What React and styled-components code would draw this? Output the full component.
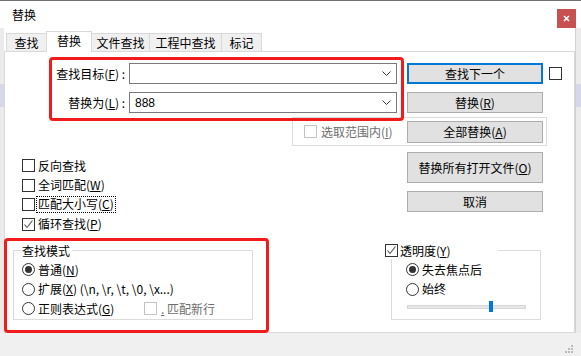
import React from "react";
import styled, { createGlobalStyle } from "styled-components";

const GlobalStyle = createGlobalStyle`
  body {
    margin: 0;
    background: #ffffff;
    font-family: "Noto Sans CJK SC", "Noto Sans", sans-serif;
    font-size: 12px;
    color: #000;
  }
  * { box-sizing: border-box; }
`;

const Window = styled.div`
  position: relative;
  width: 581px;
  height: 356px;
  display: flex;
  flex-direction: column;
  overflow: hidden;
  background: #fff;
`;

const TitleBar = styled.div`
  height: 28px;
  border-top: 1px solid #707070;
  display: flex;
  align-items: center;
  padding: 0 5px 0 12px;
  line-height: 1;
`;

const CloseBtn = styled.div`
  width: 19px;
  height: 19px;
  margin-left: auto;
  align-self: flex-end;
  background: #c75050;
  display: flex;
  align-items: center;
  justify-content: center;
`;

const Middle = styled.div`
  height: 305px;
  display: flex;
`;

const Gutter = styled.div`
  width: ${(p) => p.$w}px;
  background: #ebebeb;
  border-left: ${(p) => (p.$line ? "1px solid #d2d2d2" : "none")};
  display: flex;
  flex-direction: column;
`;

const Patch = styled.div`
  margin-top: 56px;
  height: 23px;
  background: #d7d7ea;
`;

const Main = styled.div`
  width: 571px;
  display: flex;
  flex-direction: column;
`;

const TabStrip = styled.div`
  height: 23px;
  display: flex;
  align-items: flex-end;
  padding-left: 2px;
`;

const Tab = styled.div`
  position: relative;
  width: ${(p) => p.$w}px;
  height: ${(p) => (p.$active ? 21 : 18)}px;
  margin-left: ${(p) => (p.$first ? 0 : -1)}px;
  margin-bottom: ${(p) => (p.$active ? -1 : 0)}px;
  z-index: ${(p) => (p.$active ? 2 : 1)};
  background: ${(p) => (p.$active ? "#ffffff" : "#f0f0f0")};
  border: 1px solid #d9d9d9;
  border-bottom: none;
  display: flex;
  align-items: center;
  justify-content: center;
  padding-bottom: ${(p) => (p.$active ? 3 : 0)}px;
  line-height: 1;
`;

const Panel = styled.div`
  height: 282px;
  border: 1px solid #d9d9d9;
  background: #fff;
  padding-top: 11px;
  display: flex;
  flex-direction: column;
`;

const FieldRow = styled.div`
  display: flex;
  align-items: center;
  height: 21px;
  margin-top: ${(p) => p.$mt || 0}px;
`;

const FieldLabel = styled.div`
  width: 124px;
  padding-right: 4px;
  text-align: right;
  line-height: 1;
  white-space: nowrap;
`;

const Combo = styled.div`
  width: 268px;
  height: 21px;
  border: 1px solid #7a7a7a;
  background: #fff;
  display: flex;
  align-items: center;
  padding: 0 5px 0 5px;
  line-height: 1;
  font-size: 12px;
`;

const ComboText = styled.span`
  flex: 1;
  font-family: "Liberation Sans", "Noto Sans", sans-serif;
`;

const Button = styled.div`
  width: 136px;
  height: ${(p) => p.$h || 21}px;
  margin-left: ${(p) => (p.$push ? "auto" : `${p.$ml || 0}px`)};
  margin-top: ${(p) => p.$mt || 0}px;
  background: #e1e1e1;
  border: 1px solid ${(p) => (p.$primary ? "#0078d7" : "#adadad")};
  box-shadow: ${(p) => (p.$primary ? "inset 0 0 0 1px #0078d7" : "none")};
  display: flex;
  align-items: center;
  justify-content: center;
  line-height: 1;
  white-space: nowrap;
`;

const Box = styled.div`
  flex: none;
  width: 13px;
  height: 13px;
  margin-left: ${(p) => p.$ml || 0}px;
  border: 1px solid ${(p) => (p.$disabled ? "#c4c4c4" : "#333333")};
  background: #fff;
  display: flex;
  align-items: center;
  justify-content: center;
`;

const Round = styled.div`
  flex: none;
  width: 13px;
  height: 13px;
  border: 1px solid #333;
  border-radius: 50%;
  background: #fff;
  display: flex;
  align-items: center;
  justify-content: center;

  &::after {
    content: "";
    display: ${(p) => (p.$on ? "block" : "none")};
    width: 7px;
    height: 7px;
    border-radius: 50%;
    background: #333;
  }
`;

const SelGroup = styled.div`
  margin: 4px 0 0 287px;
  width: 255px;
  height: 29px;
  border: 1px solid #dcdcdc;
  display: flex;
  align-items: center;
  padding: 0 3px 0 11px;
`;

const Text = styled.span`
  margin-left: ${(p) => p.$ml ?? 3}px;
  color: ${(p) => (p.$disabled ? "#6d6d6d" : "#000")};
  line-height: 1;
  white-space: nowrap;
  width: ${(p) => (p.$w ? `${p.$w}px` : "auto")};
  flex: none;
  padding: ${(p) => (p.$focus ? "1px 1px 2px" : "0")};
  outline: ${(p) => (p.$focus ? "1px dotted #000" : "none")};
`;

const OptionsArea = styled.div`
  display: grid;
  grid-template-columns: 402px 136px;
  margin-top: 6px;
`;

const CheckList = styled.div`
  padding: 4px 0 0 17px;
  display: flex;
  flex-direction: column;
`;

const Row = styled.div`
  display: flex;
  align-items: center;
  height: 19.5px;
`;

const ButtonColumn = styled.div`
  display: flex;
  flex-direction: column;
`;

const GroupsArea = styled.div`
  display: flex;
  margin-top: 16px;
`;

const Group = styled.div`
  position: relative;
  width: ${(p) => p.$w}px;
  height: 70px;
  margin-left: ${(p) => p.$ml}px;
  border: 1px solid #dcdcdc;
  padding: 9px 0 0 ${(p) => p.$pl}px;
  display: flex;
  flex-direction: column;
`;

const Caption = styled.div`
  position: absolute;
  top: -9px;
  left: ${(p) => p.$left}px;
  width: ${(p) => (p.$w ? `${p.$w}px` : "auto")};
  height: 17px;
  background: #fff;
  display: flex;
  align-items: center;
  padding: 0 2px 0 1px;
  line-height: 1;
`;

const Track = styled.div`
  position: relative;
  width: 119px;
  height: 4px;
  margin: 6px 0 0 1px;
  background: #e7e7e7;
  border: 1px solid #d6d6d6;
`;

const Thumb = styled.div`
  position: absolute;
  left: 81px;
  top: -5px;
  width: 4px;
  height: 11px;
  background: #0078d7;
`;

const Footer = styled.div`
  height: 23px;
  background: #f0f0f0;
  display: flex;
  justify-content: flex-end;
  align-items: flex-end;
  padding: 0 8px 3px 0;
`;

const Annotation = styled.div`
  position: absolute;
  left: ${(p) => p.$x}px;
  top: ${(p) => p.$y}px;
  width: ${(p) => p.$w}px;
  height: ${(p) => p.$h}px;
  border: 3px solid #f21b1b;
  border-radius: 4px;
  pointer-events: none;
  z-index: 5;
`;

const Key = ({ k }) => (
  <>
    (<u>{k}</u>)
  </>
);

const Chevron = () => (
  <svg width="9" height="5" viewBox="0 0 9 5">
    <polyline points="0.5,0.5 4.5,4.5 8.5,0.5" fill="none" stroke="#333" strokeWidth="1" />
  </svg>
);

const Tick = () => (
  <svg width="11" height="11" viewBox="0 0 11 11">
    <polyline points="1.5,5.5 4,8.5 9.5,1.5" fill="none" stroke="#555" strokeWidth="1.1" />
  </svg>
);

const Grip = () => (
  <svg width="9" height="9" viewBox="0 0 9 9">
    {[
      [7, 1],
      [4, 4],
      [7, 4],
      [1, 7],
      [4, 7],
      [7, 7],
    ].map(([x, y]) => (
      <rect key={`${x}-${y}`} x={x} y={y} width="2" height="2" fill="#bcbcbc" />
    ))}
  </svg>
);

const tabs = [
  { label: "查找", w: 41 },
  { label: "替换", w: 46, active: true },
  { label: "文件查找", w: 59 },
  { label: "工程中查找", w: 73 },
  { label: "标记", w: 41 },
];

export default function App() {
  return (
    <Window>
      <GlobalStyle />
      <TitleBar>
        <span>替换</span>
        <CloseBtn>
          <svg width="7" height="7" viewBox="0 0 7 7">
            <path d="M1 1 L6 6 M6 1 L1 6" stroke="#fff" strokeWidth="1.6" />
          </svg>
        </CloseBtn>
      </TitleBar>

      <Middle>
        <Gutter $w={4}>
          <Patch />
        </Gutter>
        <Main>
          <TabStrip>
            {tabs.map((t, i) => (
              <Tab key={t.label} $w={t.w} $active={t.active} $first={i === 0}>
                {t.label}
              </Tab>
            ))}
          </TabStrip>
          <Panel>
            <FieldRow>
              <FieldLabel>
                查找目标<Key k="F" /> :
              </FieldLabel>
              <Combo>
                <ComboText />
                <Chevron />
              </Combo>
              <Button $primary $ml={10}>
                查找下一个
              </Button>
              <Box $ml={6} />
            </FieldRow>
            <FieldRow $mt={8}>
              <FieldLabel>
                替换为<Key k="L" /> :
              </FieldLabel>
              <Combo>
                <ComboText>888</ComboText>
                <Chevron />
              </Combo>
              <Button $ml={10}>
                替换<Key k="R" />
              </Button>
            </FieldRow>
            <SelGroup>
              <Box $disabled />
              <Text $disabled $ml={4}>
                选取范围内<Key k="I" />
              </Text>
              <Button $h={22} $push>
                全部替换<Key k="A" />
              </Button>
            </SelGroup>

            <OptionsArea>
              <CheckList>
                <Row>
                  <Box />
                  <Text>反向查找</Text>
                </Row>
                <Row>
                  <Box />
                  <Text>
                    全词匹配<Key k="W" />
                  </Text>
                </Row>
                <Row>
                  <Box />
                  <Text $ml={2} $focus>
                    匹配大小写<Key k="C" />
                  </Text>
                </Row>
                <Row>
                  <Box>
                    <Tick />
                  </Box>
                  <Text>
                    循环查找<Key k="P" />
                  </Text>
                </Row>
              </CheckList>
              <ButtonColumn>
                <Button $h={31}>
                  替换所有打开文件<Key k="O" />
                </Button>
                <Button $mt={8}>取消</Button>
              </ButtonColumn>
            </OptionsArea>

            <GroupsArea>
              <Group $w={240} $ml={8} $pl={8}>
                <Caption $left={7}>查找模式</Caption>
                <Row>
                  <Round $on />
                  <Text>
                    普通<Key k="N" />
                  </Text>
                </Row>
                <Row>
                  <Round />
                  <Text>
                    扩展<Key k="X" /> (\n, \r, \t, \0, \x...)
                  </Text>
                </Row>
                <Row>
                  <Round />
                  <Text $w={106}>
                    正则表达式<Key k="G" />
                  </Text>
                  <Box $disabled />
                  <Text $disabled $ml={4}>
                    <u>.</u> 匹配新行
                  </Text>
                </Row>
              </Group>
              <Group $w={150} $ml={138} $pl={14}>
                <Caption $left={-8} $w={114}>
                  <Box>
                    <Tick />
                  </Box>
                  <Text $ml={2}>
                    透明度<Key k="Y" />
                  </Text>
                </Caption>
                <Row>
                  <Round $on />
                  <Text>失去焦点后</Text>
                </Row>
                <Row>
                  <Round />
                  <Text>始终</Text>
                </Row>
                <Track>
                  <Thumb />
                </Track>
              </Group>
            </GroupsArea>
          </Panel>
        </Main>
        <Gutter $w={6} $line>
          <Patch />
        </Gutter>
      </Middle>

      <Footer>
        <Grip />
      </Footer>

      <Annotation $x={49} $y={57} $w={355} $h={64} />
      <Annotation $x={4} $y={238} $w={265} $h={95} />
    </Window>
  );
}
